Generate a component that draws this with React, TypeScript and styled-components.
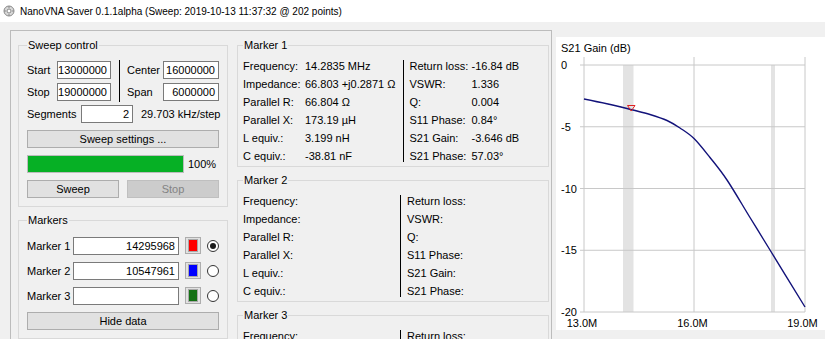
import styled, { createGlobalStyle } from "styled-components";

const GlobalStyle = createGlobalStyle`
  html, body {
    margin: 0;
    padding: 0;
  }
  body {
    background: #f0f0f0;
    font-family: "Liberation Sans", Arial, sans-serif;
    font-size: 11px;
    color: #000;
    overflow: hidden;
  }
`;

const markerInputs = [
  { name: "Marker 1", value: "14295968", color: "#ff0000", checked: true },
  { name: "Marker 2", value: "10547961", color: "#0000ff", checked: false },
  { name: "Marker 3", value: "", color: "#137013", checked: false },
];

type Field = [string, string];

const leftLabels = ["Frequency:", "Impedance:", "Parallel R:", "Parallel X:", "L equiv.:", "C equiv.:"];
const rightLabels = ["Return loss:", "VSWR:", "Q:", "S11 Phase:", "S21 Gain:", "S21 Phase:"];

const empty = (labels: string[]): Field[] => labels.map((l) => [l, ""]);

const markers: { title: string; left: Field[]; right: Field[] }[] = [
  {
    title: "Marker 1",
    left: [
      ["Frequency:", "14.2835 MHz"],
      ["Impedance:", "66.803 +j0.2871 Ω"],
      ["Parallel R:", "66.804 Ω"],
      ["Parallel X:", "173.19 µH"],
      ["L equiv.:", "3.199 nH"],
      ["C equiv.:", "-38.81 nF"],
    ],
    right: [
      ["Return loss:", "-16.84 dB"],
      ["VSWR:", "1.336"],
      ["Q:", "0.004"],
      ["S11 Phase:", "0.84°"],
      ["S21 Gain:", "-3.646 dB"],
      ["S21 Phase:", "57.03°"],
    ],
  },
  { title: "Marker 2", left: empty(leftLabels), right: empty(rightLabels) },
  { title: "Marker 3", left: empty(leftLabels), right: empty(rightLabels) },
];

// chart geometry (inside the white panel)
const plotLeft = 28;
const plotRight = 249;
const plotTop = 28;
const plotBottom = 275;
const dbStep = (plotBottom - plotTop) / 4;

const curvePts = [
  [28, 62], [52, 67], [77, 73], [94, 77.5], [111, 83.5], [124, 91],
  [138, 101.5], [154, 120.5], [171, 143], [194, 180.5], [214, 213],
  [249, 270],
];

// catmull-rom -> cubic bezier so the trace bends smoothly
function smoothPath(pts: number[][]) {
  let d = `M${pts[0][0]},${pts[0][1]}`;
  for (let i = 0; i < pts.length - 1; i++) {
    const p0 = pts[i - 1] ?? pts[i];
    const p1 = pts[i];
    const p2 = pts[i + 1];
    const p3 = pts[i + 2] ?? p2;
    const c1x = p1[0] + (p2[0] - p0[0]) / 6;
    const c1y = p1[1] + (p2[1] - p0[1]) / 6;
    const c2x = p2[0] - (p3[0] - p1[0]) / 6;
    const c2y = p2[1] - (p3[1] - p1[1]) / 6;
    d += ` C${c1x.toFixed(1)},${c1y.toFixed(1)} ${c2x.toFixed(1)},${c2y.toFixed(1)} ${p2[0]},${p2[1]}`;
  }
  return d;
}

export default function App() {
  return (
    <Window>
      <GlobalStyle />
      <TitleBar>
        <AppIcon viewBox="0 0 12 12">
          <circle cx="6" cy="6" r="5" fill="#d8d8d8" stroke="#8a8a8a" />
          <circle cx="6" cy="6" r="2" fill="#fff" stroke="#8a8a8a" />
          <path d="M6 1v2M6 9v2M1 6h2M9 6h2" stroke="#8a8a8a" />
        </AppIcon>
        <TitleText>
          NanoVNA Saver 0.1.1alpha (Sweep: 2019-10-13 11:37:32 @ 202 points)
        </TitleText>
      </TitleBar>

      <Body>
        <Frame>
          <LeftColumn>
            <GroupBox>
              <Legend>Sweep control</Legend>
              <SweepGrid>
                <Label>Start</Label>
                <NumInput>13000000</NumInput>
                <VDivider />
                <Label>Center</Label>
                <NumInput>16000000</NumInput>
                <Label>Stop</Label>
                <NumInput>19000000</NumInput>
                <Label>Span</Label>
                <NumInput>6000000</NumInput>
              </SweepGrid>
              <SegmentsRow>
                <Label $width={54}>Segments</Label>
                <NumInput $width={52}>2</NumInput>
                <StepText>29.703 kHz/step</StepText>
              </SegmentsRow>
              <Button $mt={7}>Sweep settings ...</Button>
              <ProgressRow>
                <ProgressTrack>
                  <ProgressFill style={{ width: "100%" }} />
                </ProgressTrack>
                <span>100%</span>
              </ProgressRow>
              <ButtonRow>
                <Button>Sweep</Button>
                <Button $disabled>Stop</Button>
              </ButtonRow>
            </GroupBox>

            <GroupBox $mt={6} $pt={10}>
              <Legend>Markers</Legend>
              <MarkerGrid>
                {markerInputs.map((m) => (
                  <MarkerRow key={m.name}>
                    <Label>{m.name}</Label>
                    <NumInput>{m.value}</NumInput>
                    <ColorButton>
                      <Swatch $color={m.color} />
                    </ColorButton>
                    <Radio $checked={m.checked} />
                  </MarkerRow>
                ))}
              </MarkerGrid>
              <Button $mt={7}>Hide data</Button>
            </GroupBox>
          </LeftColumn>

          <MiddleColumn>
            {markers.map((m, i) => (
              <MarkerBox key={m.title} $mt={i === 0 ? 0 : 6}>
                <Legend>{m.title}</Legend>
                <MarkerBody>
                  <FieldGrid $min={150}>
                    {m.left.map(([k, v]) => (
                      <FieldPair key={k}>
                        <span>{k}</span>
                        <span>{v}</span>
                      </FieldPair>
                    ))}
                  </FieldGrid>
                  <InfoDivider />
                  <FieldGrid>
                    {m.right.map(([k, v]) => (
                      <FieldPair key={k}>
                        <span>{k}</span>
                        <span>{v}</span>
                      </FieldPair>
                    ))}
                  </FieldGrid>
                </MarkerBody>
              </MarkerBox>
            ))}
          </MiddleColumn>
        </Frame>

        <ChartPanel>
          <svg width="269" height="293" viewBox="0 0 269 293">
            <ChartText x="5" y="11">S21 Gain (dB)</ChartText>

            <rect x="67" y={plotTop} width="10.5" height={plotBottom - plotTop} fill="#e3e3e3" />
            <rect x="215" y={plotTop} width="4" height={plotBottom - plotTop} fill="#e3e3e3" />

            {[plotLeft, 138, plotRight].map((x) => (
              <line key={x} x1={x} x2={x} y1={20} y2={plotBottom} stroke="#c8c8c8" />
            ))}
            {[0, -5, -10, -15, -20].map((db, i) => (
              <g key={db}>
                <line
                  x1={24}
                  x2={plotRight}
                  y1={plotTop + i * dbStep}
                  y2={plotTop + i * dbStep}
                  stroke="#c8c8c8"
                />
                <ChartText x="5" y={plotTop + i * dbStep}>
                  {db}
                </ChartText>
              </g>
            ))}

            <path d={smoothPath(curvePts)} fill="none" stroke="#12127a" strokeWidth="1.4" />
            <path d="M71.5 68.5 L79 68.5 L75.2 74 Z" fill="none" stroke="#e02020" strokeWidth="1" />

            <ChartText x="26" y="286" textAnchor="middle">13.0M</ChartText>
            <ChartText x="136.5" y="286" textAnchor="middle">16.0M</ChartText>
            <ChartText x="246.5" y="286" textAnchor="middle">19.0M</ChartText>
          </svg>
        </ChartPanel>
      </Body>
    </Window>
  );
}

const Window = styled.div`
  width: 825px;
  height: 339px;
  overflow: hidden;
  background: #f0f0f0;
`;

const TitleBar = styled.div`
  height: 22px;
  background: #fff;
  display: flex;
  align-items: center;
  padding-left: 3px;
  gap: 5px;
`;

const AppIcon = styled.svg`
  width: 12px;
  height: 12px;
`;

const TitleText = styled.span`
  font-size: 10px;
  color: #000;
`;

const Body = styled.div`
  display: flex;
  align-items: flex-start;
  padding: 8px 0 0 10px;
`;

const Frame = styled.div`
  width: 542px;
  height: 330px;
  box-sizing: border-box;
  border: 1px solid #bcbcbc;
  padding: 7px 2px 0 7px;
  display: flex;
  gap: 9px;
`;

const LeftColumn = styled.div`
  width: 210px;
  display: flex;
  flex-direction: column;
`;

const MiddleColumn = styled.div`
  width: 312px;
  display: flex;
  flex-direction: column;
`;

const GroupBox = styled.fieldset<{ $mt?: number; $pt?: number }>`
  margin: ${(p) => p.$mt ?? 0}px 0 0 0;
  padding: ${(p) => p.$pt ?? 9}px 8px 8px 8px;
  border: 1px solid #d9d9d9;
  min-width: 0;
  box-sizing: border-box;
  width: 100%;
`;

const Legend = styled.legend`
  padding: 0 1px;
  line-height: 14px;
  font-size: 11px;
`;

const SweepGrid = styled.div`
  display: grid;
  grid-template-columns: 30px 54px 16px 36px 56px;
  grid-template-rows: 18px 18px;
  row-gap: 4px;
`;

const VDivider = styled.div`
  grid-row: span 2;
  justify-self: center;
  width: 1px;
  margin: -1px 0;
  background: #000;
`;

const Label = styled.span<{ $width?: number }>`
  display: flex;
  align-items: center;
  white-space: nowrap;
  ${(p) => (p.$width ? `width: ${p.$width}px; flex: none;` : "")}
`;

const NumInput = styled.div<{ $width?: number }>`
  box-sizing: border-box;
  height: 18px;
  ${(p) => (p.$width ? `width: ${p.$width}px; flex: none;` : "")}
  background: #fff;
  border: 1px solid #7a7a7a;
  display: flex;
  align-items: center;
  justify-content: flex-end;
  padding: 0 3px;
  white-space: nowrap;
  overflow: hidden;
`;

const SegmentsRow = styled.div`
  display: flex;
  height: 18px;
  margin-top: 4px;
`;

const StepText = styled.span`
  display: flex;
  align-items: center;
  margin-left: 8px;
  white-space: nowrap;
`;

const Button = styled.div<{ $mt?: number; $disabled?: boolean }>`
  box-sizing: border-box;
  height: 18px;
  margin-top: ${(p) => p.$mt ?? 0}px;
  display: flex;
  align-items: center;
  justify-content: center;
  background: ${(p) => (p.$disabled ? "#cccccc" : "#e1e1e1")};
  border: 1px solid ${(p) => (p.$disabled ? "#bfbfbf" : "#adadad")};
  color: ${(p) => (p.$disabled ? "#838383" : "#000")};
`;

const ProgressRow = styled.div`
  display: flex;
  align-items: center;
  gap: 4px;
  height: 18px;
  margin-top: 7px;
`;

const ProgressTrack = styled.div`
  box-sizing: border-box;
  width: 157px;
  height: 18px;
  border: 1px solid #bcbcbc;
  background: #e6e6e6;
`;

const ProgressFill = styled.div`
  height: 100%;
  background: #06b025;
`;

const ButtonRow = styled.div`
  display: grid;
  grid-template-columns: 1fr 1fr;
  gap: 8px;
  margin-top: 7px;
`;

const MarkerGrid = styled.div`
  display: grid;
  grid-template-columns: 40px 106px 16px 12px;
  grid-auto-rows: 18px;
  column-gap: 6px;
  row-gap: 7px;
`;

const MarkerRow = styled.div`
  display: contents;
`;

const ColorButton = styled.div`
  box-sizing: border-box;
  width: 16px;
  height: 17px;
  border: 1px solid #adadad;
  background: #e1e1e1;
  display: flex;
  align-items: center;
  justify-content: center;
`;

const Swatch = styled.div<{ $color: string }>`
  width: 8px;
  height: 11px;
  background: ${(p) => p.$color};
  box-shadow: 0 0 0 1px rgba(0, 0, 0, 0.25);
`;

const Radio = styled.div<{ $checked: boolean }>`
  box-sizing: border-box;
  align-self: center;
  width: 12px;
  height: 12px;
  border-radius: 50%;
  border: 1px solid #333;
  background: #fff;
  display: flex;
  align-items: center;
  justify-content: center;
  &::after {
    content: "";
    width: 6px;
    height: 6px;
    border-radius: 50%;
    background: ${(p) => (p.$checked ? "#1a1a1a" : "transparent")};
  }
`;

const MarkerBox = styled.fieldset<{ $mt: number }>`
  margin: ${(p) => p.$mt}px 0 0 0;
  padding: 5px 5px 1px 5px;
  border: 1px solid #d9d9d9;
  min-width: 0;
  box-sizing: border-box;
  width: 100%;
  flex: none;
`;

const MarkerBody = styled.div`
  display: flex;
  align-items: stretch;
`;

const FieldGrid = styled.div<{ $min?: number }>`
  display: grid;
  grid-template-columns: 62px auto;
  grid-auto-rows: 18px;
  align-content: start;
  ${(p) => (p.$min ? `min-width: ${p.$min}px;` : "")}
`;

const FieldPair = styled.div`
  display: contents;
  & > span {
    display: flex;
    align-items: center;
    white-space: nowrap;
  }
`;

const InfoDivider = styled.div`
  width: 1px;
  background: #000;
  margin: 3px 6px 3px 7px;
  flex: none;
`;

const ChartPanel = styled.div`
  margin: 7px 0 0 4px;
  width: 269px;
  height: 293px;
  background: #fff;
  flex: none;
  & svg {
    display: block;
  }
`;

const ChartText = styled.text`
  font-family: "Liberation Sans", Arial, sans-serif;
  font-size: 11px;
  fill: #000;
  dominant-baseline: central;
`;
